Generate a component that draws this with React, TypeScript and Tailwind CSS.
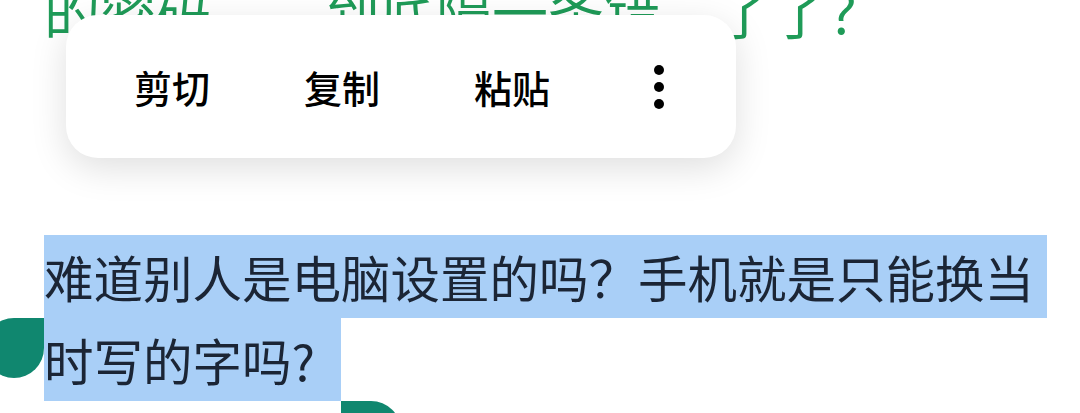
const MENU_ITEMS = ['剪切', '复制', '粘贴'];

// title line that is scrolled almost out of view; one fixed cell per glyph
const TITLE = ['的', '密', '码', '，', '', '到', '底', '隔', '一', '条', '错', '', '了', '了', '？'];

function SelectionMenu() {
  return (
    <div className="absolute left-[66px] top-[15px] flex h-[143px] w-[670px] items-center rounded-[32px] bg-white pl-[68px] shadow-[0_10px_36px_rgba(0,0,0,0.13)]">
      {MENU_ITEMS.map((item, i) => (
        <span
          key={item}
          className={`text-[38px] font-medium leading-none text-black ${i > 0 ? 'ml-[94px]' : ''}`}
        >
          {item}
        </span>
      ))}
      {/* overflow dots */}
      <svg className="ml-[103px]" width="12" height="46" viewBox="0 0 12 46">
        <circle cx="6" cy="6" r="5" fill="#000" />
        <circle cx="6" cy="23" r="5" fill="#000" />
        <circle cx="6" cy="40" r="5" fill="#000" />
      </svg>
    </div>
  );
}

export default function App() {
  return (
    <div className="relative h-[413px] w-[1080px] overflow-hidden bg-white font-['Noto_Sans_CJK_SC',sans-serif]">
      <p className="-mt-[18px] flex whitespace-nowrap pl-[44px] text-[56px] leading-[56px] text-[#1f9b58]">
        {TITLE.map((ch, i) => (
          <span key={i} className="w-[56px] shrink-0">
            {ch}
          </span>
        ))}
      </p>

      {/* selected paragraph */}
      <div className="mt-[197px] pl-[44px] text-[49.5px] leading-[83px] text-[#1b2535]">
        <div className="w-[1003px] whitespace-nowrap bg-[#a9cff7]">难道别人是电脑设置的吗？手机就是只能换当</div>
        <div className="w-[297px] whitespace-nowrap bg-[#a9cff7]">时写的字吗?</div>
      </div>

      {/* selection handles */}
      <div className="absolute left-[-16px] top-[318px] h-[60px] w-[60px] rounded-full rounded-tr-none bg-[#10876f]" />
      <div className="absolute left-[341px] top-[401px] h-[60px] w-[60px] rounded-full rounded-tl-none bg-[#10876f]" />

      <SelectionMenu />
    </div>
  );
}
